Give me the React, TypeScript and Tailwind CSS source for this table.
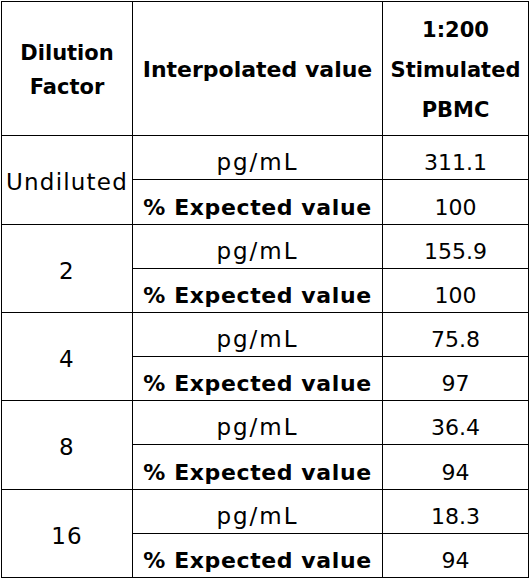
import React from 'react';

const rows = [
  { factor: 'Undiluted', pg: '311.1', pct: '100' },
  { factor: '2', pg: '155.9', pct: '100' },
  { factor: '4', pg: '75.8', pct: '97' },
  { factor: '8', pg: '36.4', pct: '94' },
  { factor: '16', pg: '18.3', pct: '94' },
];

const App = () => {
  return (
    <div className="bg-white w-[530px] h-[580px] pt-px pl-px" style={{ fontFamily: '"DejaVu Sans", sans-serif' }}>
      <div className="inline-grid grid-cols-[130px_249px_145px] grid-rows-[133px_43px_44px_43px_43px_43px_43px_43px_44px_43px_43px] gap-px p-px bg-black text-black">
        {/* Header */}
        <div className="bg-white flex items-center justify-center text-center font-bold text-[21px] leading-[34px] pt-[2px]">
          Dilution<br />Factor
        </div>
        <div className="bg-white flex items-center justify-center font-bold text-[22px] pt-[2px]">
          Interpolated value
        </div>
        <div className="bg-white flex items-center justify-center text-center font-bold text-[21px] leading-[40px] pt-[2px]">
          1:200<br />Stimulated<br />PBMC
        </div>

        {rows.map((r) => (
          <React.Fragment key={r.factor}>
            <div className="row-span-2 bg-white flex items-center justify-center text-[23px] tracking-[1.2px] pt-[5px]">
              {r.factor}
            </div>
            <div className="bg-white flex items-end justify-center text-[23px] tracking-[2px] leading-none pb-[5px]">
              pg/mL
            </div>
            <div className="bg-white flex items-end justify-center text-[22px] leading-none pb-[5px]">
              {r.pg}
            </div>
            <div className="bg-white flex items-end justify-center font-bold text-[22px] tracking-[0.6px] leading-none pb-[5px]">
              % Expected value
            </div>
            <div className="bg-white flex items-end justify-center text-[22px] leading-none pb-[5px]">
              {r.pct}
            </div>
          </React.Fragment>
        ))}
      </div>
    </div>
  );
};

export default App;
